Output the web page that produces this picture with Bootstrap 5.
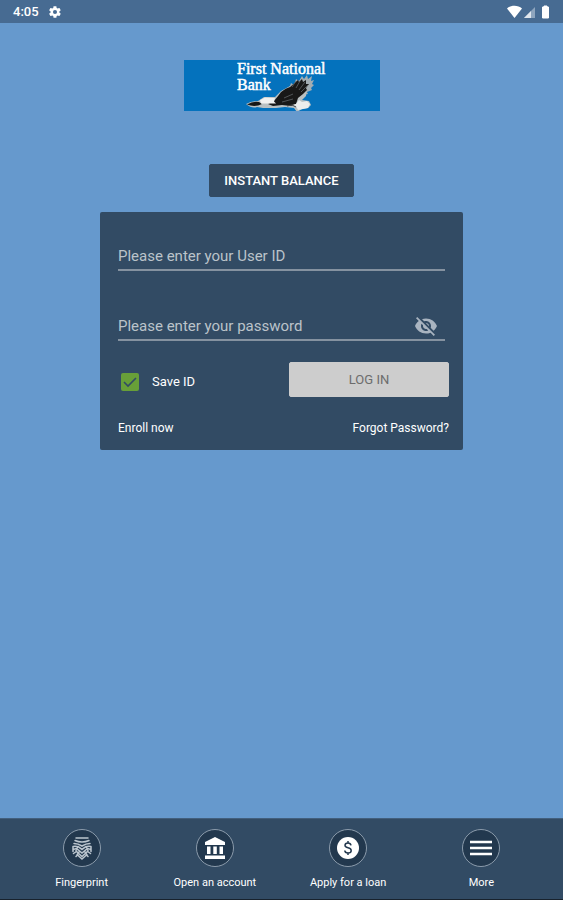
<!DOCTYPE html>
<html lang="en">
<head>
<meta charset="utf-8">
<meta name="viewport" content="width=device-width, initial-scale=1">
<title>First National Bank</title>
<link rel="stylesheet" href="https://cdn.jsdelivr.net/npm/bootstrap@5.3.0/dist/css/bootstrap.min.css">
<style>
  body { background: #6699cd; font-family: Roboto, "Liberation Sans", sans-serif; color: #fff; }
  .status-bar { background: #476b92; height: 23px; padding: 1px 13px 0; font-size: 13px; font-weight: 500; }
  .status-bar svg, .brand-logo svg, .dock svg { display: block; }
  .brand-logo { background: #0472bd; width: 196px; margin-top: 37px; }
  .brand-logo text { font-family: "Liberation Serif", serif; font-size: 16px; fill: #fff; stroke: #fff; stroke-width: .5px; }
  .btn-balance { --bs-btn-color: #fff; --bs-btn-bg: #324b64; --bs-btn-border-color: #324b64; --bs-btn-hover-color: #fff; --bs-btn-hover-bg: #2a4056;
    font-size: 13px; font-weight: 500; line-height: 19px; border-radius: 2px; margin-top: 53px; padding: 6px 14px; }
  .login-panel { background: #324b64; width: 65%; max-width: 363px; margin-top: 15px; padding: 30px 14px 12px 18px; border-radius: 2px; }
  .line-field { border-bottom: 2px solid #8592a0; height: 29px; margin-right: 4px; }
  .line-field .form-control { color: #fff; font-size: 15px; line-height: 20px; padding: 3px 0; background: none; }
  .line-field .form-control::placeholder { color: #bbc3ca; opacity: 1; }
  .line-field + .line-field { margin-top: 41px; }
  .eye-btn { color: #a9b4c0; margin-right: 7px; }
  .login-row { margin-top: 21px; }
  .save-check .form-check-input { width: 18px; height: 18px; margin: 0 13px 0 3px; border: 0; border-radius: 2px; background-color: #689f38;
    background-size: 18px; }
  .save-check .form-check-input:checked { background-image: url("data:image/svg+xml,%3csvg xmlns='http://www.w3.org/2000/svg' viewBox='0 0 18 18'%3e%3cpath d='M3 9l4 4 8-8' fill='none' stroke='%23324b64' stroke-width='1.6'/%3e%3c/svg%3e"); }
  .save-check { font-size: 13px; padding-top: 4px; }
  .btn-login { --bs-btn-color: #6c6c6c; --bs-btn-bg: #cdcdcd; --bs-btn-border-color: #cdcdcd; --bs-btn-hover-bg: #dedede;
    width: 160px; font-size: 13px; line-height: 21px; padding: 6px; border-radius: 2px; }
  .panel-links { margin-top: 21px; font-size: 12px; line-height: 20px; }
  .dock { background: #324b64; padding: 10px 15px 9px; border-bottom: 1px solid #18222d; border-top: 1px solid #425f7d; font-size: 11px; line-height: 15px; }
  .dock-ring { width: 38px; height: 38px; background: #22384e; border: 1px solid #8b9bab; margin-bottom: 8px; }
</style>
<script src="https://cdn.jsdelivr.net/npm/bootstrap@5.3.0/dist/js/bootstrap.bundle.min.js"></script>
</head>
<body class="d-flex flex-column min-vh-100">
<header class="status-bar d-flex align-items-center justify-content-between">
  <div class="d-flex align-items-center gap-2">
    <span>4:05</span>
    <svg width="16" height="14" viewBox="0 0 24 24" fill="#fff" aria-hidden="true"><path d="M19.4 13a7.5 7.5 0 0 0 0-2l2.1-1.6c.2-.2.3-.4.1-.7l-2-3.4c-.1-.2-.4-.3-.6-.2l-2.5 1a7.300 7.300 0 0 0-1.700-1l-.4-2.600c0-.3-.2-.5-.5-.5h-4c-.3 0-.5.2-.5.5L9 5.100a7.300 7.300 0 0 0-1.700 1l-2.500-1c-.2-.1-.5 0-.6.2l-2 3.400c-.1.2-.1.5.1.7L4.500 11a7.500 7.500 0 0 0 0 2l-2.200 1.600c-.2.2-.2.4-.1.700l2 3.400c.1.2.4.3.6.2l2.500-1a7.300 7.300 0 0 0 1.700 1l.4 2.600c0 .3.2.5.5.5h4c.3 0 .5-.2.5-.5l.4-2.600a7.300 7.300 0 0 0 1.700-1l2.500 1c.2.1.5 0 .6-.2l2-3.400c.1-.3.1-.5-.1-.7zM12 15.500a3.500 3.500 0 1 1 0-7 3.500 3.500 0 0 1 0 7z"/></svg>
  </div>
  <svg width="43" height="14" viewBox="0 0 43 14" aria-hidden="true"><path d="M0 3.500C4-.2 11-.2 15 3.500L7.500 13z" fill="#fff"/><path d="M28 2v11H17z" fill="#8ea5be"/><path d="M24 6v7h-7z" fill="#dfe6ee"/><path d="M37 1h3v1h1.500v11h-6V2H37z" fill="#fff" stroke="#fff" stroke-linejoin="round"/></svg>
</header>

<main class="flex-grow-1 d-flex flex-column align-items-center">
  <div class="brand-logo">
    <svg width="196" height="51" viewBox="0 0 196 51" role="img" aria-label="First National Bank">
      <text x="53" y="14">First National</text>
      <text x="53" y="30">Bank</text>
      <path d="M105 29l2-6 3 2 2-6 3 2 3-5 2 3 3-4 1 4 4-3-1 5 3-1-2 4 2 1-3 3 1 2-5 2 1 2-5 1 1 3z" fill="#a3adb3"/>
      <path d="M62 44q5-3 12-3l6-4 11 0 6-6 9-5 11-4 6 6-1 8-4 4 7 1 2 4-3 3-6 1-5 3-3-4-9-1-9 1-13 0-6-1q-5 2-11-3z" fill="#b9c0c2"/>
      <path d="M63 44.500q6-3.500 12-2.500l3 2q-7 3.500-15 .5z" fill="#171717"/>
      <path d="M90 41q5-6 7-9 5-4 9-5l8-7 1 2 3-3 1 3 3-2 0 4 3 0-3 4 1 2-4 4-5 4-2 6-5 2-9-1-9 1-5-2z" fill="#181818"/>
      <path d="M108 27l4-6M112 28l4-7M115 30l6-8M117 32l7-7M100 38l9-4M98 42l11-3" stroke="#686e72" stroke-width=".7"/>
      <path d="M76 40l5-2.500 10 .5-1 3.500 2 2-15 0z" fill="#f1f1f0"/>
      <path d="M115 40l3 2 5-1 3 3-2 4-5 1-5 1-2-4-4-1 4-1z" fill="#ecedec"/>
      <path d="M103 46l5-1 4 2" stroke="#444" fill="none"/>
    </svg>
  </div>
  <button type="button" class="btn btn-balance">INSTANT BALANCE</button>

  <form class="login-panel">
    <div class="line-field d-flex align-items-center">
      <input type="text" class="form-control border-0 rounded-0 shadow-none" placeholder="Please enter your User ID" aria-label="User ID">
    </div>
    <div class="line-field d-flex align-items-center">
      <input type="password" class="form-control border-0 rounded-0 shadow-none" placeholder="Please enter your password" aria-label="Password">
      <button type="button" class="eye-btn btn p-0 border-0" aria-label="Show password">
        <svg class="d-block" width="24" height="24" viewBox="0 0 24 24" fill="currentColor"><path d="M12 7c2.760 0 5 2.240 5 5 0 .65-.13 1.260-.36 1.830l2.920 2.920c1.510-1.260 2.700-2.890 3.430-4.750-1.730-4.390-6-7.500-11-7.500-1.400 0-2.740.25-3.980.7l2.160 2.160C10.740 7.130 11.350 7 12 7zM2 4.270l2.280 2.280.46.46C3.080 8.300 1.780 10.020 1 12c1.730 4.390 6 7.500 11 7.500 1.550 0 3.030-.3 4.380-.84l.42.42L19.730 22 21 20.730 3.270 3 2 4.270zM7.530 9.800l1.550 1.550c-.05.21-.08.43-.08.65 0 1.660 1.340 3 3 3 .22 0 .44-.03.65-.08l1.550 1.550c-.67.33-1.410.53-2.200.53-2.760 0-5-2.240-5-5 0-.79.2-1.530.53-2.200zm4.310-.78l3.150 3.150.02-.16c0-1.660-1.340-3-3-3l-.17.01z"/></svg>
      </button>
    </div>
    <div class="login-row d-flex align-items-center justify-content-between">
      <div class="save-check d-flex align-items-center">
        <input class="form-check-input" type="checkbox" id="saveId" checked>
        <label for="saveId">Save ID</label>
      </div>
      <button type="submit" class="btn btn-login">LOG IN</button>
    </div>
    <div class="panel-links d-flex justify-content-between">
      <a href="#" class="text-white text-decoration-none">Enroll now</a>
      <a href="#" class="text-white text-decoration-none">Forgot Password?</a>
    </div>
  </form>
</main>

<nav class="dock" aria-label="Quick actions">
  <div class="row row-cols-4 g-0 text-center">
    <a href="#" class="col d-flex flex-column align-items-center text-white text-decoration-none">
      <span class="dock-ring rounded-circle d-flex align-items-center justify-content-center">
        <svg width="22" height="24" viewBox="0 0 22 24" fill="none" stroke="#bcc6cf" stroke-width="1.500" stroke-linecap="round" aria-hidden="true"><path d="M5 2h12M4 4.500q7 3 14 0M3 7.500q4 0 8 2.500 4-2.500 8-2.500M2 10.500q5-1 9 3 4-4 9-3M2 14q2-2 4-1l5 4 5-4q2-1 4 1M2.500 17.500l3-2 5.500 5 5.500-5 3 2M5 20.500l1.500-1.500 4.500 4 4.500-4 1.500 1.500M2 10.500v5M20 10.500v5M7 10.500l-2 4M15 10.500l2 4M8 16l-2 3M14 16l2 3"/></svg>
      </span>
      <span>Fingerprint</span>
    </a>
    <a href="#" class="col d-flex flex-column align-items-center text-white text-decoration-none">
      <span class="dock-ring rounded-circle d-flex align-items-center justify-content-center">
        <svg width="22" height="22" viewBox="0 0 22 22" fill="#fff" aria-hidden="true"><path d="M11 0l10 5v3H1V5zM3 9.500h3.500V17H3zM9.300 9.500h3.500V17H9.300zM15.500 9.500H19V17h-3.500zM1 18.500h20V22H1z"/></svg>
      </span>
      <span>Open an account</span>
    </a>
    <a href="#" class="col d-flex flex-column align-items-center text-white text-decoration-none">
      <span class="dock-ring rounded-circle d-flex align-items-center justify-content-center">
        <svg width="22" height="22" viewBox="0 0 22 22" fill="none" aria-hidden="true"><circle cx="11" cy="11" r="11" fill="#fff"/><path d="M14 8.300Q13.600 6 11 6 8 6 8 8.300q0 1.900 3 2.500 3.200.7 3.200 2.900 0 2.300-3.200 2.300-3 0-3.200-2.500M11 4v2M11 16v2" stroke="#22384e" stroke-width="1.500"/></svg>
      </span>
      <span>Apply for a loan</span>
    </a>
    <a href="#" class="col d-flex flex-column align-items-center text-white text-decoration-none">
      <span class="dock-ring rounded-circle d-flex align-items-center justify-content-center">
        <svg width="22" height="16" viewBox="0 0 22 16" stroke="#fff" stroke-width="2.600" aria-hidden="true"><path d="M0 2h22M0 8h22M0 14h22"/></svg>
      </span>
      <span>More</span>
    </a>
  </div>
</nav>
</body>
</html>
